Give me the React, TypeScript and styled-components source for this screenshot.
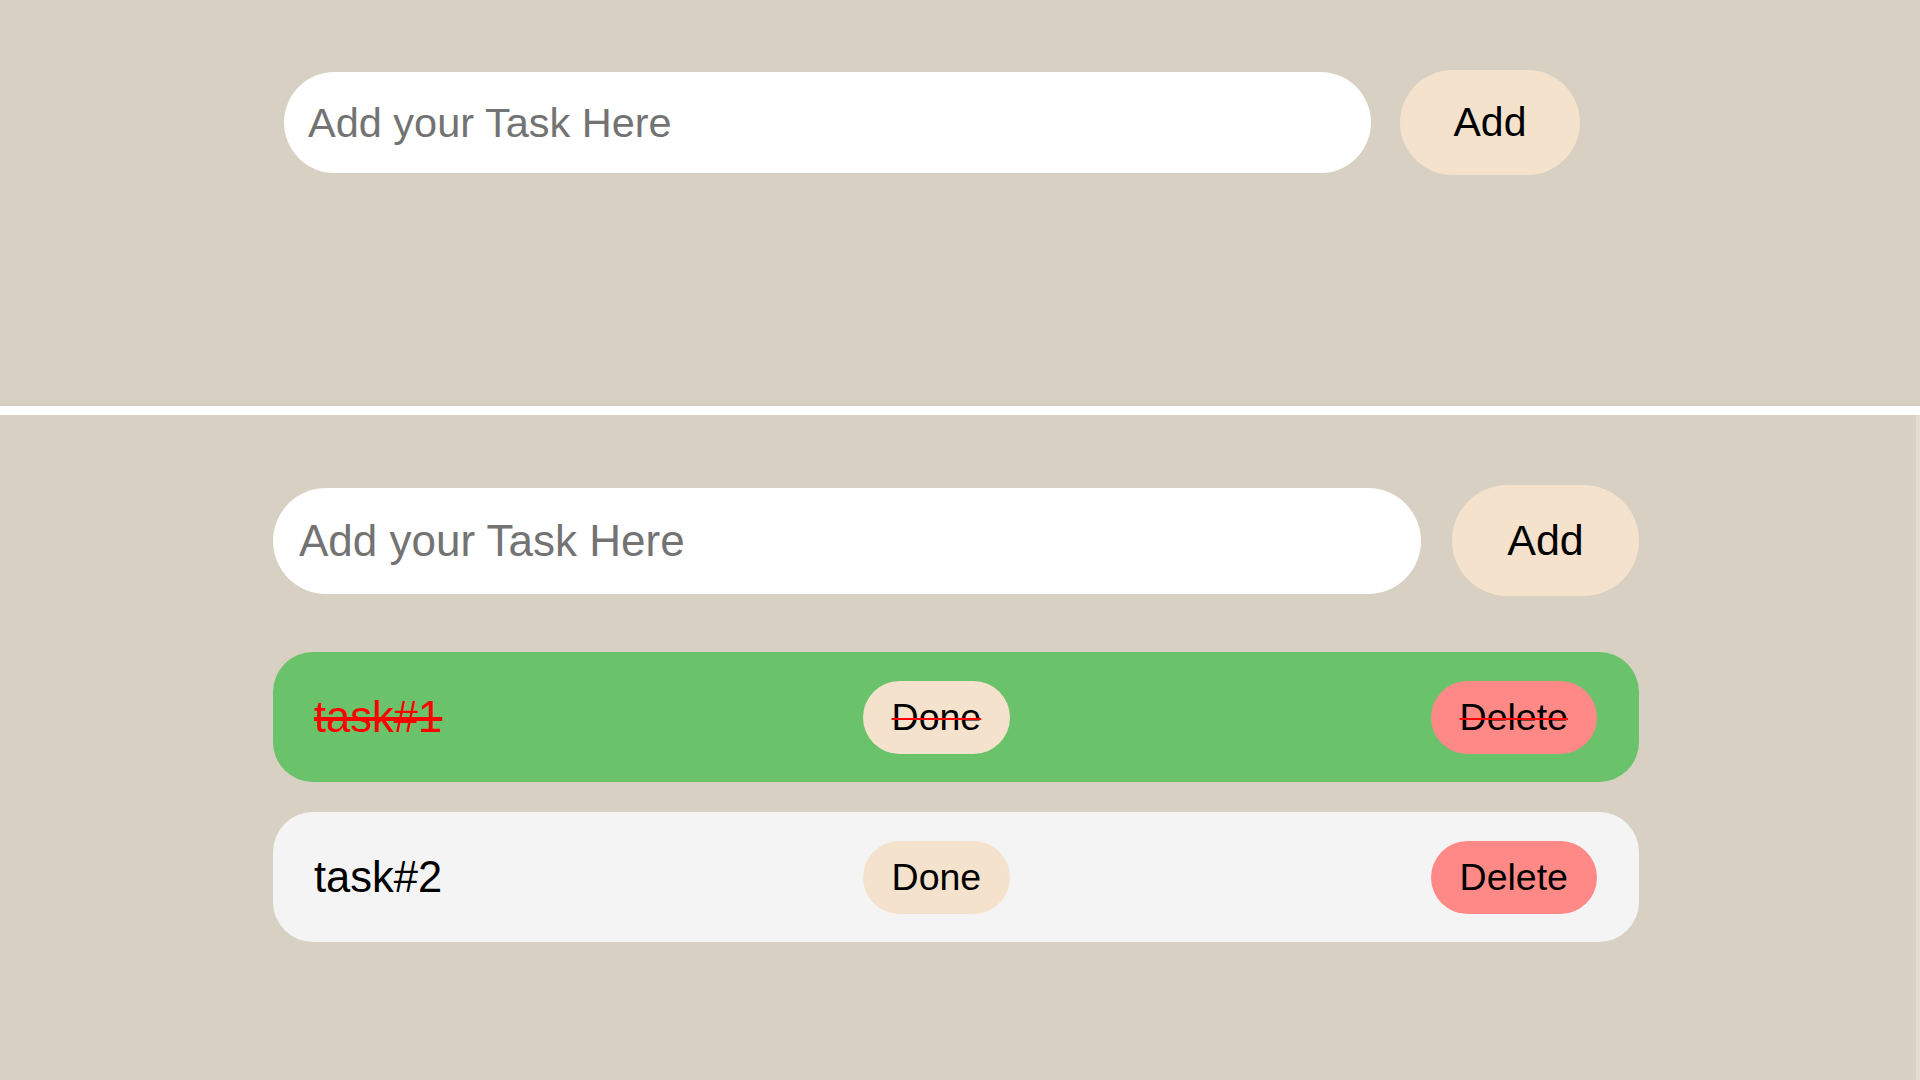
import React, { useState } from 'react';
import styled, { createGlobalStyle, css } from 'styled-components';

type Task = { id: number; name: string; done: boolean };

const GlobalStyle = createGlobalStyle`
  html, body {
    margin: 0;
    padding: 0;
    background: #d8d0c2;
    font-family: "Liberation Sans", Arial, sans-serif;
  }
  * {
    box-sizing: border-box;
  }
`;

function TodoForm(props: { big?: boolean; onAdd?: (name: string) => void }) {
  const [value, setValue] = useState('');

  const handleAdd = () => {
    if (!value.trim()) return;
    props.onAdd && props.onAdd(value.trim());
    setValue('');
  };

  return (
    <Form $big={props.big}>
      <Input
        $big={props.big}
        type="text"
        placeholder="Add your Task Here"
        value={value}
        onChange={(e) => setValue(e.target.value)}
      />
      <AddButton $big={props.big} onClick={handleAdd}>
        Add
      </AddButton>
    </Form>
  );
}

function App() {
  const [tasks, setTasks] = useState<Task[]>([
    { id: 1, name: 'task#1', done: true },
    { id: 2, name: 'task#2', done: false },
  ]);

  const addTask = (name: string) => {
    setTasks([...tasks, { id: Date.now(), name, done: false }]);
  };

  const toggleDone = (id: number) => {
    setTasks(tasks.map((t) => (t.id === id ? { ...t, done: !t.done } : t)));
  };

  const deleteTask = (id: number) => {
    setTasks(tasks.filter((t) => t.id !== id));
  };

  return (
    <Page>
      <GlobalStyle />
      <TopPanel>
        <TodoForm />
      </TopPanel>
      <Divider />
      <BottomPanel>
        <Column>
          <TodoForm big onAdd={addTask} />
          <List>
            {tasks.map((task) => (
              <Row key={task.id} $done={task.done}>
                <TaskName $done={task.done}>{task.name}</TaskName>
                <PillButton $done={task.done} onClick={() => toggleDone(task.id)}>
                  Done
                </PillButton>
                <PillButton
                  $done={task.done}
                  $danger
                  onClick={() => deleteTask(task.id)}
                >
                  Delete
                </PillButton>
              </Row>
            ))}
          </List>
        </Column>
      </BottomPanel>
    </Page>
  );
}

export default App;

const Page = styled.div`
  width: 1920px;
  height: 1080px;
  display: flex;
  flex-direction: column;
  overflow: hidden;
`;

const TopPanel = styled.section`
  height: 404px;
  padding: 70px 0 0 284px;
  background: #d8d0c2;
`;

const Divider = styled.div`
  height: 11px;
  background: #ffffff;
  border-top: 2px solid #d1cbc1;
`;

const BottomPanel = styled.section`
  flex: 1;
  padding: 70px 0 0 273px;
  background: #d8d0c2;
  border-right: 4px solid #e3ddd2;
`;

const Column = styled.div`
  width: 1366px;
  display: flex;
  flex-direction: column;
  gap: 56px;
`;

const Form = styled.div<{ $big?: boolean }>`
  display: flex;
  align-items: center;
  gap: ${(props) => (props.$big ? '31px' : '29px')};
`;

const Input = styled.input<{ $big?: boolean }>`
  width: ${(props) => (props.$big ? '1148px' : '1087px')};
  height: ${(props) => (props.$big ? '106px' : '101px')};
  padding: 0 ${(props) => (props.$big ? '26px' : '24px')};
  border: none;
  outline: none;
  border-radius: 999px;
  background: #ffffff;
  color: #222;
  font-family: "Liberation Sans", Arial, sans-serif;
  font-size: ${(props) => (props.$big ? '44px' : '41.5px')};
  &::placeholder {
    color: #737373;
  }
`;

const AddButton = styled.button<{ $big?: boolean }>`
  width: ${(props) => (props.$big ? '187px' : '180px')};
  height: ${(props) => (props.$big ? '111px' : '105px')};
  border: none;
  border-radius: 999px;
  background: #f4e2cd;
  color: #000;
  font-family: "Liberation Sans", Arial, sans-serif;
  font-size: ${(props) => (props.$big ? '43px' : '41px')};
  cursor: pointer;
`;

const List = styled.div`
  display: flex;
  flex-direction: column;
  gap: 30px;
`;

const Row = styled.div<{ $done?: boolean }>`
  height: 130px;
  display: flex;
  align-items: center;
  justify-content: space-between;
  padding: 0 42px 0 41px;
  border-radius: 40px;
  background: ${(props) => (props.$done ? '#6ac26b' : '#f4f4f4')};
`;

const strike = css`
  text-decoration: line-through;
  text-decoration-color: #ff0000;
`;

const TaskName = styled.span<{ $done?: boolean }>`
  font-size: 43.5px;
  color: ${(props) => (props.$done ? '#ff0000' : '#000')};
  ${(props) => props.$done && strike}
  text-decoration-thickness: 4px;
`;

const PillButton = styled.button<{ $done?: boolean; $danger?: boolean }>`
  height: 73px;
  padding: 0 29px;
  border: none;
  border-radius: 999px;
  background: ${(props) => (props.$danger ? '#fe8986' : '#f4e2cd')};
  color: #000;
  font-family: "Liberation Sans", Arial, sans-serif;
  font-size: 37.5px;
  cursor: pointer;
  ${(props) => props.$done && strike}
  text-decoration-thickness: 2px;
`;
